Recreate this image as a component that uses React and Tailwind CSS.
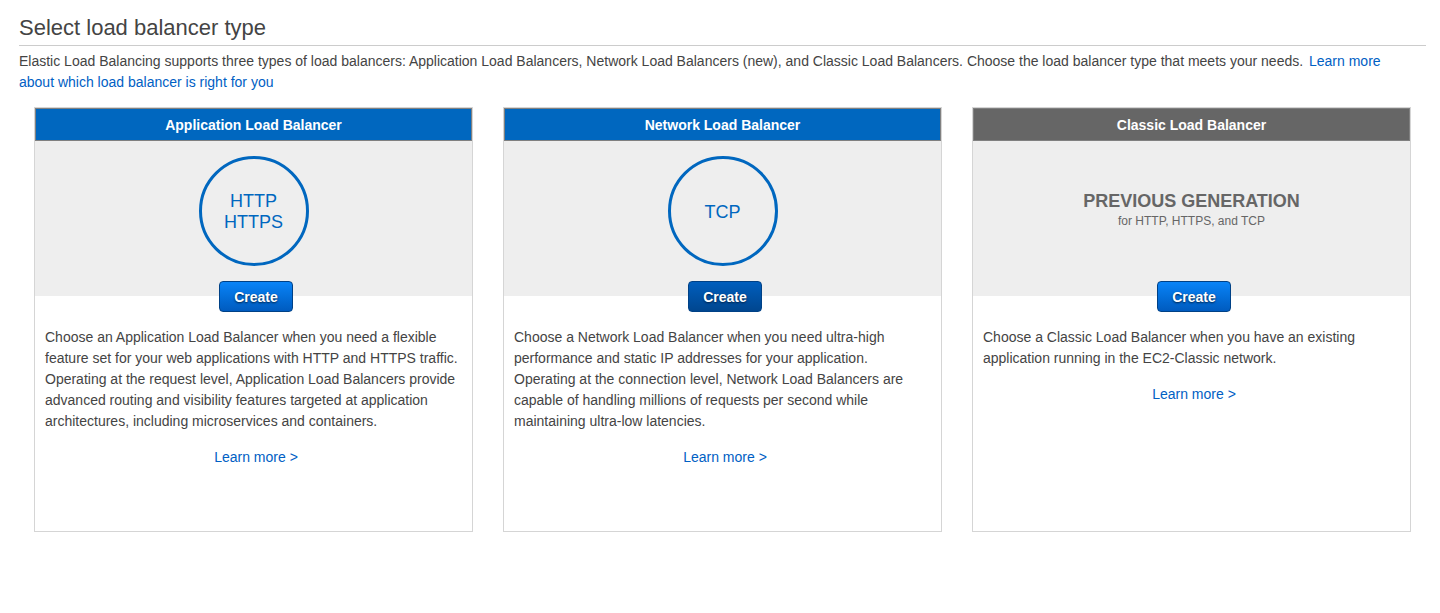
const cards = [
  {
    title: "Application Load Balancer",
    header: "bg-[#0067bf]",
    lines: ["HTTP", "HTTPS"],
    button: "from-[#0a84f8] to-[#005bbf]",
    text: "Choose an Application Load Balancer when you need a flexible feature set for your web applications with HTTP and HTTPS traffic. Operating at the request level, Application Load Balancers provide advanced routing and visibility features targeted at application architectures, including microservices and containers.",
  },
  {
    title: "Network Load Balancer",
    header: "bg-[#0067bf]",
    lines: ["TCP"],
    button: "from-[#005ebd] to-[#00468f]",
    text: "Choose a Network Load Balancer when you need ultra-high performance and static IP addresses for your application. Operating at the connection level, Network Load Balancers are capable of handling millions of requests per second while maintaining ultra-low latencies.",
  },
  {
    title: "Classic Load Balancer",
    header: "bg-[#666]",
    button: "from-[#0a84f8] to-[#005bbf]",
    text: "Choose a Classic Load Balancer when you have an existing application running in the EC2-Classic network.",
  },
];

function Card({ card }) {
  return (
    <section className="flex min-h-[425px] flex-col border border-[#d5d5d5]">
      <h2 className={`border border-[#808080] pt-[6px] pb-[5px] text-center text-sm leading-5 font-bold text-white ${card.header}`}>
        {card.title}
      </h2>
      <div className="flex h-[155px] flex-col items-center bg-[#eee] pt-[15px]">
        {card.lines ? (
          <div className="flex size-[110px] flex-col items-center justify-center rounded-full border-3 border-[#0067bf] pt-[2px] text-lg leading-[21px] text-[#0067bf]">
            {card.lines.map((line) => (
              <span key={line}>{line}</span>
            ))}
          </div>
        ) : (
          <div className="flex h-[110px] flex-col items-center justify-center text-[#666]">
            <strong className="text-lg leading-5">PREVIOUS GENERATION</strong>
            <span className="text-xs leading-5">for HTTP, HTTPS, and TCP</span>
          </div>
        )}
      </div>
      <div className="-mt-[15px] flex justify-center pl-[5px]">
        <button
          type="button"
          className={`h-[31px] w-[74px] rounded-[4px] border border-[#004186] bg-linear-to-b text-sm font-bold text-white text-shadow-[0_1px_2px_#002244] ${card.button}`}
        >
          Create
        </button>
      </div>
      <p className="px-[10px] pt-[15px] text-sm leading-[21px]">{card.text}</p>
      <div className="pt-[15px] pl-[5px] text-center text-sm leading-[21px]">
        <a href="#learn-more" className="text-[#0060c4]">Learn more &gt;</a>
      </div>
    </section>
  );
}

export default function App() {
  return (
    <main className="min-h-screen bg-white pt-[11px] pr-[14px] pl-[19px] font-['Liberation_Sans',Arial,sans-serif] text-[#444]">
      <h1 className="border-b border-[#ccc] text-[22px] leading-[34px]">Select load balancer type</h1>
      <p className="pt-[5px] pr-5 text-sm leading-[21px]">
        Elastic Load Balancing supports three types of load balancers: Application Load Balancers, Network Load Balancers (new), and Classic Load Balancers. Choose the load balancer type that meets your needs.{" "}
        <a href="#compare" className="ml-[2px] text-[#0060c4]">Learn more about which load balancer is right for you</a>
      </p>
      <div className="grid grid-cols-3 gap-[30px] px-[15px] pt-[14px]">
        {cards.map((card) => (
          <Card key={card.title} card={card} />
        ))}
      </div>
    </main>
  );
}
